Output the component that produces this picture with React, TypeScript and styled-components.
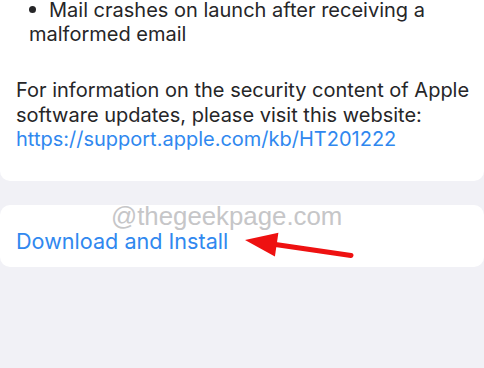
import React from "react";
import styled, { createGlobalStyle } from "styled-components";

const Global = createGlobalStyle`
  html, body { margin: 0; padding: 0; }
  body {
    background: #f1f1f6;
    font-family: Inter, "Liberation Sans", sans-serif;
    -webkit-font-smoothing: antialiased;
  }
`;

const Page = styled.div`
  width: 484px;
  height: 368px;
  overflow: hidden;
  display: flex;
  flex-direction: column;
  gap: 24px;
`;

const Card = styled.section`
  background: #ffffff;
  border-radius: 0 0 10px 10px;
  padding: 0 8px 0 16px;
  height: 181px;
  box-sizing: border-box;
  color: #262628;
  font-size: 20px;
  line-height: 24px;
`;

const BulletItem = styled.p`
  margin: -2px 0 0 0;
  padding-left: 13px;
`;

const Dot = styled.span`
  display: inline-block;
  width: 7px;
  height: 7px;
  border-radius: 50%;
  background: #262628;
  margin-right: 13px;
  vertical-align: 4px;
`;

const Para = styled.p`
  margin: 32px 0 0 0;
  line-height: 24.5px;
`;

const Link = styled.a`
  color: #3088ef;
  text-decoration: none;
`;

const ActionCard = styled.section`
  position: relative;
  background: #ffffff;
  border-radius: 10px;
  height: 62px;
  padding: 0 16px;
  display: flex;
  align-items: center;
  box-sizing: border-box;
`;

const Action = styled.span`
  color: #3088ef;
  font-size: 21.6px;
  padding-top: 10px;
`;

const Watermark = styled.span`
  position: absolute;
  left: 111px;
  top: -3px;
  color: #c6c6c8;
  font-family: "Liberation Sans", Arial, sans-serif;
  font-size: 25.8px;
`;

const Arrow = styled.svg`
  position: absolute;
  left: 0;
  top: 0;
  width: 484px;
  height: 62px;
  overflow: visible;
`;

export default function App() {
  return (
    <>
      <Global />
      <Page>
        <Card>
          <BulletItem>
            <Dot />
            Mail crashes on launch after receiving a malformed email
          </BulletItem>
          <Para>
            For information on the security content of Apple software updates,
            please visit this website:{" "}
            <Link href="#">https://support.apple.com/kb/HT201222</Link>
          </Para>
        </Card>
        <ActionCard>
          <Watermark>@thegeekpage.com</Watermark>
          <Action>Download and Install</Action>
          <Arrow viewBox="0 0 484 62">
            <line x1="351" y1="50.5" x2="272" y2="39" stroke="#ee1111" strokeWidth="5" strokeLinecap="round" />
            <polygon points="245,35 278.4,27.8 274.9,51.6" fill="#ee1111" />
          </Arrow>
        </ActionCard>
      </Page>
    </>
  );
}
